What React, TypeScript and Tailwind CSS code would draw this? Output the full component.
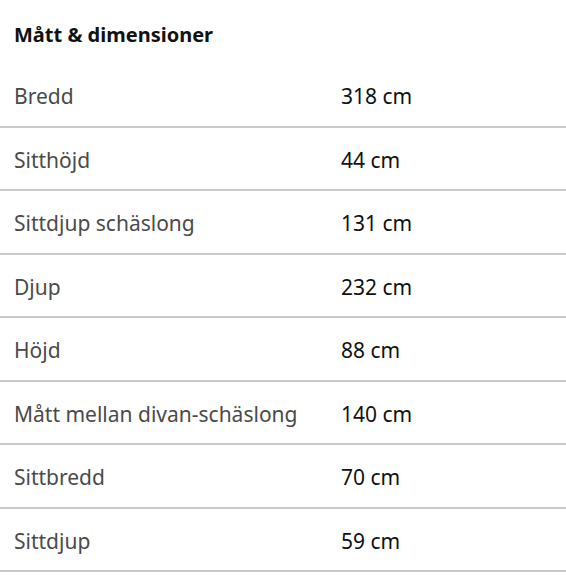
const rows: [string, string][] = [
  ["Bredd", "318 cm"],
  ["Sitthöjd", "44 cm"],
  ["Sittdjup schäslong", "131 cm"],
  ["Djup", "232 cm"],
  ["Höjd", "88 cm"],
  ["Mått mellan divan-schäslong", "140 cm"],
  ["Sittbredd", "70 cm"],
  ["Sittdjup", "59 cm"],
];

export default function App() {
  return (
    <div className="w-[566px] h-[575px] bg-white font-['Noto_Sans',sans-serif] overflow-hidden">
      <h2 className="h-[64px] pt-[19px] pl-[14px] text-[20px] leading-[32px] font-bold text-[#111]">
        Mått &amp; dimensioner
      </h2>
      <dl>
        {rows.map(([label, value]) => (
          <div
            key={label}
            className="h-[63.5px] flex items-center pt-[4px] border-b-2 border-[#c9c9c9] text-[21px]"
          >
            <dt className="w-[341px] pl-[14px] text-[#4a4a4a]">{label}</dt>
            <dd className="text-[#111]">{value}</dd>
          </div>
        ))}
      </dl>
    </div>
  );
}
